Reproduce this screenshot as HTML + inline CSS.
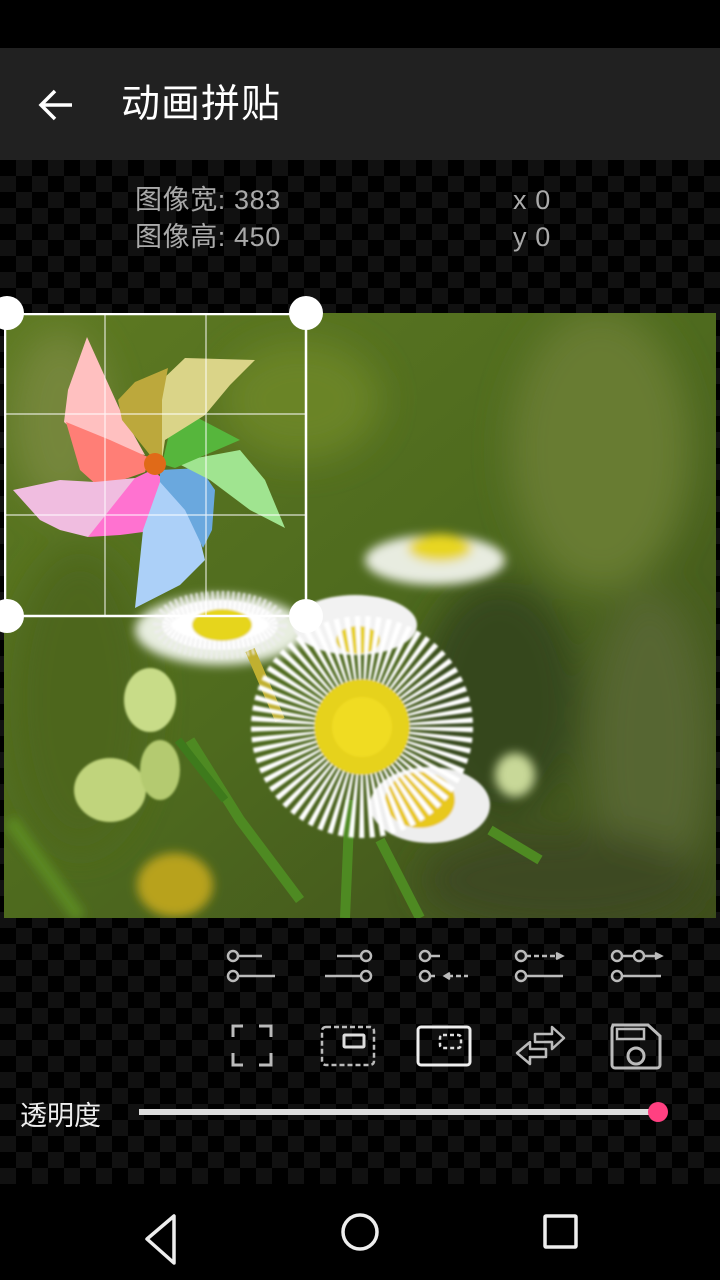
<!DOCTYPE html>
<html><head><meta charset="utf-8"><style>
*{margin:0;padding:0;box-sizing:border-box}
body{width:720px;height:1280px;background:#000;position:relative;overflow:hidden;font-family:"Liberation Sans","Noto Sans CJK SC",sans-serif}
.checker{position:absolute;left:0;top:160px;width:720px;height:1024px;background-color:#000;
background-image:linear-gradient(45deg,#111 25%,transparent 25%,transparent 75%,#111 75%),linear-gradient(45deg,#111 25%,transparent 25%,transparent 75%,#111 75%);
background-size:32px 32px;background-position:0 0,16px 16px}
.bar{position:absolute;left:0;top:48px;width:720px;height:112px;background:#212121}
.title{position:absolute;left:121px;top:80px;color:#fff;font-size:39px;line-height:50px;letter-spacing:1px}
.info{position:absolute;color:#aaa;font-size:27px;line-height:37px;letter-spacing:.6px}
.lbl{position:absolute;left:20px;top:1094px;color:#eee;font-size:27px}
.track{position:absolute;left:139px;top:1109px;width:520px;height:6px;background:#ddd}
.thumb{position:absolute;left:648px;top:1102px;width:20px;height:20px;border-radius:50%;background:#ff4081}
</style></head><body>
<div class="checker"></div>
<div class="bar"></div>
<svg style="position:absolute;left:36px;top:86px" width="40" height="40" viewBox="0 0 40 40"><path d="M36 19H6M19 5L5 19l14 14" stroke="#fff" stroke-width="3.5" fill="none"/></svg>
<div class="title">动画拼贴</div>
<div class="info" style="left:135px;top:182px">图像宽: 383<br>图像高: 450</div>
<div class="info" style="left:513px;top:182px">x 0<br>y 0</div>

<svg style="position:absolute;left:4px;top:313px" width="712" height="605" viewBox="4 313 712 605">
<defs>
<filter id="b1" x="-50%" y="-50%" width="200%" height="200%"><feGaussianBlur stdDeviation="18"/></filter>
<filter id="b2" x="-50%" y="-50%" width="200%" height="200%"><feGaussianBlur stdDeviation="5"/></filter>
<filter id="b3"><feGaussianBlur stdDeviation="1"/></filter>
<linearGradient id="bg" x1="0" y1="0" x2="1" y2="1"><stop offset="0" stop-color="#5e7a22"/><stop offset=".5" stop-color="#4e6a1e"/><stop offset="1" stop-color="#3e4e1c"/></linearGradient>
</defs>
<rect x="4" y="313" width="712" height="605" fill="url(#bg)"/>
<g filter="url(#b1)">
<ellipse cx="600" cy="450" rx="90" ry="140" fill="#687c32"/>
<ellipse cx="500" cy="700" rx="80" ry="120" fill="#34461a"/>
<ellipse cx="650" cy="750" rx="60" ry="160" fill="#566630"/>
<ellipse cx="80" cy="700" rx="70" ry="150" fill="#4e661c"/>
<ellipse cx="300" cy="400" rx="80" ry="60" fill="#6a8428"/>
<ellipse cx="560" cy="880" rx="140" ry="50" fill="#3e4a22"/>
<ellipse cx="60" cy="420" rx="50" ry="90" fill="#74863a"/>
</g>
<path d="M10 820L80 918" stroke="#5c8a22" stroke-width="14" filter="url(#b2)"/>
<g filter="url(#b2)">
<ellipse cx="435" cy="560" rx="70" ry="25" fill="#e8ece0"/>
<ellipse cx="440" cy="548" rx="32" ry="14" fill="#e8d622"/>
<ellipse cx="175" cy="885" rx="38" ry="32" fill="#b8a21a"/>
<ellipse cx="515" cy="775" rx="20" ry="22" fill="#c8d898"/>
<ellipse cx="220" cy="630" rx="85" ry="35" fill="#e8eee0"/>
</g>
<path d="M250 650L280 720" stroke="#c0b030" stroke-width="10"/>
<path d="M190 740L240 820L300 900M350 800L345 918M380 840L420 918M490 830L540 860" stroke="#4e8a22" stroke-width="10" fill="none"/>
<path d="M178 740L225 800" stroke="#3e7a1c" stroke-width="8"/>
<g filter="url(#b3)">
<ellipse cx="150" cy="700" rx="26" ry="32" fill="#c8dc88"/>
<ellipse cx="110" cy="790" rx="36" ry="32" fill="#c0d47c"/>
<ellipse cx="160" cy="770" rx="20" ry="30" fill="#b4ca70"/>
<ellipse cx="220" cy="625" rx="58" ry="25" fill="#fff" stroke="#eee" stroke-width="18" stroke-dasharray="2 3"/>
<ellipse cx="222" cy="625" rx="30" ry="16" fill="#e6d51a"/>
<ellipse cx="355" cy="625" rx="62" ry="30" fill="#f2f2f2"/>
<ellipse cx="358" cy="640" rx="22" ry="14" fill="#e6d020"/>
<ellipse cx="430" cy="805" rx="60" ry="38" fill="#eee"/>
<ellipse cx="420" cy="800" rx="35" ry="28" fill="#e8c81a"/>
<circle cx="362" cy="727" r="62" fill="none" stroke="#fff" stroke-width="98" stroke-dasharray="3 3"/>
<circle cx="362" cy="727" r="48" fill="#e6d21c"/>
<circle cx="362" cy="727" r="30" fill="#f0dc24"/>
</g>
<!-- pinwheel -->
<polygon points="87,337 68,390 64,422 90,445 145,455 120,410" fill="#ffc0c0"/>
<polygon points="66,422 80,470 100,488 145,472 150,458 110,440" fill="#ff7e76"/>
<polygon points="13,490 60,480 95,482 135,478 110,520 88,537 60,530 40,520" fill="#f0bde0"/>
<polygon points="135,478 152,470 162,478 164,510 158,530 120,535 88,537" fill="#ff72d0"/>
<polygon points="160,482 190,500 205,560 180,585 135,608 143,530" fill="#acd0f8"/>
<polygon points="160,470 200,468 215,490 212,530 203,548 185,510 160,482" fill="#6aa8de"/>
<polygon points="175,462 240,450 265,480 285,528 250,510 210,480" fill="#a0e490"/>
<polygon points="162,464 170,430 198,418 240,440 175,468" fill="#56b63c"/>
<polygon points="162,460 162,380 185,358 255,360 230,385 205,415 165,440" fill="#dad488"/>
<polygon points="150,455 122,420 118,400 135,382 168,368 162,400 162,460" fill="#bca83c"/>
<circle cx="155" cy="464" r="11" fill="#e06a18"/>
<g stroke="#fff" fill="none">
<rect x="5" y="314" width="301" height="302" stroke-width="2.5"/>
<path d="M105 314V616M206 314V616M5 414H306M5 515H306" stroke-width="1.2" opacity=".8"/>
</g>
</svg>
<svg style="position:absolute;left:0;top:296px" width="330" height="340"><g fill="#fff"><circle cx="7" cy="17" r="17"/><circle cx="306" cy="17" r="17"/><circle cx="7" cy="320" r="17"/><circle cx="306" cy="320" r="17"/></g></svg>

<svg style="position:absolute;left:0;top:930px" width="720" height="160" fill="none" stroke="#bbb" stroke-width="2.5">
<circle cx="233" cy="26" r="5"/><path d="M238 26H262"/><circle cx="233" cy="46" r="5"/><path d="M238 46H275"/>
<circle cx="366" cy="26" r="5"/><path d="M337 26H361"/><circle cx="366" cy="46" r="5"/><path d="M325 46H361"/>
<circle cx="425" cy="26" r="5"/><path d="M430 26H440"/><circle cx="425" cy="46" r="5"/><path d="M430 46H438M448 46H468" stroke-dasharray="5 3"/><path d="M450 43l-5 3 5 3" fill="#bbb"/>
<circle cx="521" cy="26" r="5"/><path d="M526 26H558" stroke-dasharray="5 3"/><path d="M556 23l6 3-6 3" fill="#bbb"/><circle cx="521" cy="46" r="5"/><path d="M526 46H563"/>
<circle cx="617" cy="26" r="5"/><circle cx="639" cy="26" r="5"/><path d="M622 26H634M644 26H658"/><path d="M655 23l6 3-6 3" fill="#bbb"/><circle cx="617" cy="46" r="5"/><path d="M622 46H661"/>
<path d="M233 107V96H243M259 96H271V107M233 123V135H243M259 135H271V123" stroke-width="3"/>
<rect x="322" y="97" width="52" height="38" rx="4" stroke-dasharray="5 3" stroke-width="2.5"/>
<rect x="344" y="105" width="20" height="12" rx="1" stroke="#ddd" stroke-width="3"/>
<rect x="418" y="97" width="52" height="38" rx="3" stroke="#eee" stroke-width="3"/>
<rect x="440" y="105" width="21" height="13" rx="3" stroke-dasharray="4 3" stroke="#ddd"/>
<path d="M535 104H552V97L564 108L552 119V112H535Z" stroke-width="2.5" stroke-linejoin="round"/>
<path d="M546 119H530V112L517 123L530 134V127H546Z" stroke-width="2.5" stroke-linejoin="round"/>
<path d="M613 95H648L660 106V135A3 3 0 0 1 657 138H615A3 3 0 0 1 612 135V98Z" stroke-width="3"/>
<rect x="617" y="99" width="27" height="10" stroke-width="2.5"/><circle cx="636" cy="126" r="8" stroke-width="3"/>
</svg>

<div class="lbl">透明度</div>
<div class="track"></div>
<div class="thumb"></div>

<svg style="position:absolute;left:0;top:1184px" width="720" height="96" fill="none" stroke="#eee" stroke-width="3.5">
<path d="M174 32V79L147 55Z" stroke-linejoin="round"/>
<circle cx="360" cy="48" r="17"/>
<rect x="545" y="32" width="31" height="31" rx="1"/>
</svg>
</body></html>
